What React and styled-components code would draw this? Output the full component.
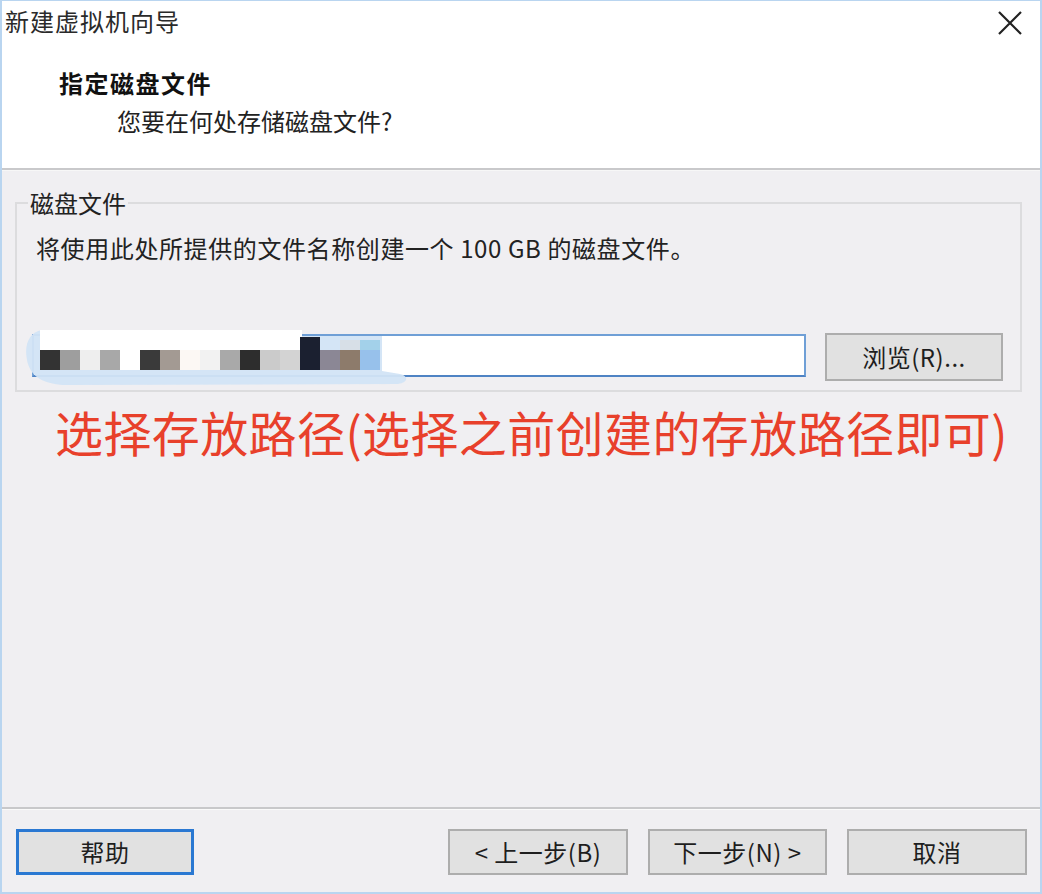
import React from "react";
import styled, { createGlobalStyle } from "styled-components";

const Global = createGlobalStyle`
  html, body { margin: 0; padding: 0; background: #ffffff; }
  body { font-family: "Noto Sans CJK SC", "Noto Sans", sans-serif; }
  * { box-sizing: border-box; }
`;

const Window = styled.div`
  width: 1042px;
  height: 894px;
  border: 2px solid #b9d5f0;
  border-top-width: 1px;
  display: flex;
  flex-direction: column;
  background: #f0eff2;
  color: #1e1e1e;
  font-size: 24px;
  line-height: 28px;
`;

const Header = styled.div`
  height: 167px;
  background: #ffffff;
  padding: 6px 0 0 3px;
  display: flex;
  flex-direction: column;
`;

const TitleRow = styled.div`
  display: flex;
  align-items: center;
  justify-content: space-between;
  height: 28px;
  padding-right: 17px;
`;

const Title = styled.div`
  color: #2a2a2a;
  letter-spacing: 1px;
`;

const CloseBtn = styled.div`
  width: 26px;
  height: 26px;
  display: flex;
  align-items: center;
  justify-content: center;
  margin-top: 4px;
`;

const Heading = styled.div`
  margin: 34px 0 0 54px;
  font-weight: 700;
  letter-spacing: 1.5px;
  color: #111;
`;

const SubHeading = styled.div`
  margin: 10px 0 0 112px;
  color: #222;
`;

const Rule = styled.div`
  height: 3px;
  border-top: 2px solid #c9c9cb;
  border-bottom: 1px solid #f7f7f7;
  background: #e3e3e3;
`;

const Body = styled.div`
  flex: 1;
  padding: 18px 18px 0 13px;
  display: flex;
  flex-direction: column;
`;

const Group = styled.fieldset`
  margin: 0;
  padding: 0 17px 9px 0;
  border: 2px solid #dcdcde;
  min-width: 0;
`;

const Legend = styled.legend`
  margin-left: 11px;
  padding: 0 2px;
  color: #222;
`;

const Desc = styled.div`
  margin: 17px 0 0 19px;
  color: #222;
  letter-spacing: 0.6px;
`;

const PathRow = styled.div`
  margin: 71px 0 0 15px;
  display: flex;
  align-items: flex-start;
  gap: 19px;
`;

const PathField = styled.div`
  position: relative;
  width: 774px;
  height: 43px;
  margin-top: 1px;
  background: #ffffff;
  border: 2px solid #6f9fd6;
  border-bottom-color: #4f83c4;
`;

const Redaction = styled.svg`
  position: absolute;
  left: -12px;
  top: -10px;
  overflow: visible;
`;

const WinButton = styled.div`
  width: ${(p) => p.$w || 180}px;
  height: ${(p) => p.$h || 46}px;
  display: flex;
  align-items: center;
  justify-content: center;
  background: #e1e1e1;
  border: ${(p) => (p.$primary ? "3px solid #2a78d2" : "2px solid #adadad")};
  color: #1e1e1e;
  letter-spacing: 0.5px;
  flex-shrink: 0;
`;

const Note = styled.div`
  margin: 11px 0 0 40px;
  color: #e8402b;
  font-size: 48px;
  line-height: 56px;
  letter-spacing: 0.4px;
  white-space: nowrap;
`;

const FooterRule = styled.div`
  height: 3px;
  border-top: 2px solid #c8c8ca;
  border-bottom: 1px solid #fafafa;
`;

const Footer = styled.div`
  height: 82px;
  padding: 19px 13px 0 14px;
  display: flex;
  align-items: flex-start;
`;

const NavGroup = styled.div`
  margin-left: auto;
  display: flex;
  gap: 20px;
`;

const mosaic = [
  [40, "#333333"], [60, "#9e9e9e"], [80, "#eeeeee"], [100, "#a8a8a8"],
  [120, "#ffffff"], [140, "#3a3a3a"], [160, "#a39a93"], [180, "#fcf8f4"],
  [200, "#f2f2f2"], [220, "#a9a9a9"], [240, "#2d2d2d"], [260, "#cbcbcb"],
  [280, "#d3d3d3"], [320, "#8b8795"], [340, "#8d7b6b"], [360, "#97c1eb"],
];

export default function App() {
  return (
    <>
      <Global />
      <Window>
        <Header>
          <TitleRow>
            <Title>新建虚拟机向导</Title>
            <CloseBtn>
              <svg width="24" height="24" viewBox="0 0 24 24">
                <path d="M1 1 L23 23 M23 1 L1 23" stroke="#222" strokeWidth="2.2" fill="none" />
              </svg>
            </CloseBtn>
          </TitleRow>
          <Heading>指定磁盘文件</Heading>
          <SubHeading>您要在何处存储磁盘文件?</SubHeading>
        </Header>
        <Rule />
        <Body>
          <Group>
            <Legend>磁盘文件</Legend>
            <Desc>将使用此处所提供的文件名称创建一个 100 GB 的磁盘文件。</Desc>
            <PathRow>
              <PathField>
                <Redaction width="390" height="62" viewBox="22 326 390 62">
                  <path
                    d="M42 330 C29 332 24 345 27 360 C30 376 42 383 62 385 L398 384 C408 383 409 376 400 374 L382 371 L382 336 L300 336 L300 330 Z"
                    fill="#d2e4f6"
                    opacity="0.95"
                  />
                  <rect x="40" y="330" width="262" height="20" fill="#ffffff" />
                  {mosaic.map(([x, c]) => (
                    <rect key={x} x={x} y="350" width="20" height="20" fill={c} />
                  ))}
                  <rect x="300" y="337" width="20" height="33" fill="#1b2030" />
                  <rect x="340" y="340" width="20" height="10" fill="#d7dfe7" />
                  <rect x="360" y="340" width="20" height="10" fill="#a3d1ea" />
                </Redaction>
              </PathField>
              <WinButton $w={178} $h={48}>浏览(R)...</WinButton>
            </PathRow>
          </Group>
          <Note>选择存放路径(选择之前创建的存放路径即可)</Note>
        </Body>
        <FooterRule />
        <Footer>
          <WinButton $primary $w={178}>帮助</WinButton>
          <NavGroup>
            <WinButton>&lt; 上一步(B)</WinButton>
            <WinButton $w={179}>下一步(N) &gt;</WinButton>
            <WinButton>取消</WinButton>
          </NavGroup>
        </Footer>
      </Window>
    </>
  );
}
